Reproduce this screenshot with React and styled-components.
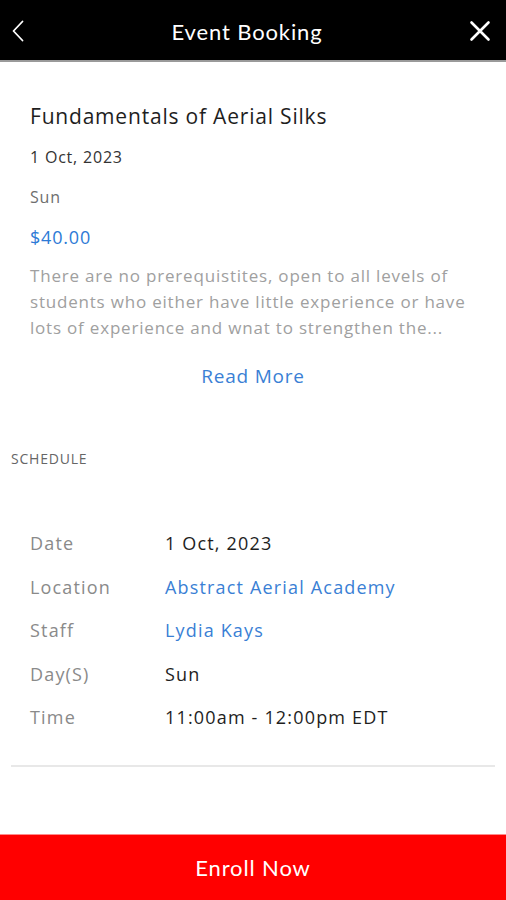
import React from "react";
import styled, { createGlobalStyle } from "styled-components";

const GlobalStyle = createGlobalStyle`
  html, body {
    margin: 0;
    padding: 0;
    background: #fff;
  }
  body {
    font-family: "Open Sans", "Noto Sans", sans-serif;
    letter-spacing: 0.05em;
  }
  * { box-sizing: border-box; }
`;

const schedule = [
  { label: "Date", value: "1 Oct, 2023" },
  { label: "Location", value: "Abstract Aerial Academy", link: true },
  { label: "Staff", value: "Lydia Kays", link: true },
  { label: "Day(S)", value: "Sun" },
  { label: "Time", value: "11:00am - 12:00pm EDT" },
];

const App = () => {
  return (
    <>
      <GlobalStyle />
      <Page>
        <Header>
          <IconButton aria-label="back">
            <svg width="14" height="24" viewBox="0 0 14 24">
              <path d="M11.5 2.5 L2.5 12 L11.5 21.5" fill="none" stroke="#fff" strokeWidth="1.8" strokeLinecap="round" strokeLinejoin="round" />
            </svg>
          </IconButton>
          <Title>Event Booking</Title>
          <IconButton aria-label="close">
            <svg width="22" height="22" viewBox="0 0 22 22">
              <path d="M2.5 2.5 L19.5 19.5 M19.5 2.5 L2.5 19.5" fill="none" stroke="#fff" strokeWidth="2.6" strokeLinecap="round" />
            </svg>
          </IconButton>
        </Header>

        <Content>
          <Details>
            <EventName>Fundamentals of Aerial Silks</EventName>
            <Meta>1 Oct, 2023</Meta>
            <Meta muted>Sun</Meta>
            <Price>$40.00</Price>
            <Description>
              There are no prerequistites, open to all levels of students who
              either have little experience or have lots of experience and wnat
              to strengthen the...
            </Description>
            <ReadMore>Read More</ReadMore>
          </Details>

          <SectionLabel>SCHEDULE</SectionLabel>

          <ScheduleList>
            {schedule.map((row) => (
              <ScheduleRow key={row.label}>
                <RowLabel>{row.label}</RowLabel>
                <RowValue link={row.link ? 1 : 0}>{row.value}</RowValue>
              </ScheduleRow>
            ))}
          </ScheduleList>
          <Divider />
        </Content>

        <EnrollButton>Enroll Now</EnrollButton>
      </Page>
    </>
  );
};

export default App;

const Page = styled.div`
  width: 506px;
  height: 900px;
  display: flex;
  flex-direction: column;
  overflow: hidden;
`;

const Header = styled.header`
  height: 62px;
  flex-shrink: 0;
  background: #000;
  border-bottom: 2px solid #9a9a9a;
  display: flex;
  align-items: center;
  justify-content: space-between;
  padding: 0 15px 0 11px;
`;

const IconButton = styled.button`
  background: none;
  border: none;
  padding: 0;
  display: flex;
  align-items: center;
  cursor: pointer;
  margin-top: 2px;
`;

const Title = styled.h1`
  margin: 0;
  color: #fff;
  font-family: "Lato", "Open Sans", sans-serif;
  font-weight: 400;
  font-size: 22px;
  letter-spacing: 0.04em;
  margin-top: 2px;
`;

const Content = styled.main`
  flex: 1;
  display: flex;
  flex-direction: column;
  padding: 0 11px;
`;

const Details = styled.section`
  display: flex;
  flex-direction: column;
  padding: 39px 19px 0;
`;

const EventName = styled.h2`
  margin: 0 0 15px;
  font-size: 21px;
  font-weight: 400;
  line-height: 30px;
  color: #1e1e1e;
`;

const Meta = styled.div`
  font-size: 16px;
  line-height: 22px;
  color: ${(p) => (p.muted ? "#6e6e6e" : "#333")};
  margin-bottom: ${(p) => (p.muted ? "17px" : "18px")};
`;

const Price = styled.div`
  font-size: 18px;
  line-height: 24px;
  color: #2d7ad6;
  margin: 0 0 14px;
`;

const Description = styled.p`
  margin: 0;
  font-size: 17px;
  line-height: 26px;
  color: #a0a0a0;
`;

const ReadMore = styled.a`
  align-self: center;
  margin-top: 22px;
  font-size: 19px;
  line-height: 26px;
  color: #3a7fd5;
  cursor: pointer;
`;

const SectionLabel = styled.h3`
  margin: 60px 0 0;
  font-size: 14px;
  font-weight: 400;
  line-height: 20px;
  color: #666;
`;

const ScheduleList = styled.div`
  display: flex;
  flex-direction: column;
  gap: 17.5px;
  padding: 61px 19px 0;
`;

const ScheduleRow = styled.div`
  display: grid;
  grid-template-columns: 135px 1fr;
  font-size: 18px;
  line-height: 26px;
  letter-spacing: 0.065em;
`;

const RowLabel = styled.span`
  color: #8a8a8a;
`;

const RowValue = styled.span`
  color: ${(p) => (p.link ? "#3a7fd5" : "#1e1e1e")};
`;

const Divider = styled.hr`
  margin: 35px 0 0;
  border: none;
  border-top: 2px solid #e8e8e8;
`;

const EnrollButton = styled.button`
  height: 66px;
  flex-shrink: 0;
  width: 100%;
  border: none;
  border-top: 1px solid #ff8a8a;
  background: #ff0000;
  color: #fff;
  font-family: "Lato", "Open Sans", sans-serif;
  font-size: 22px;
  letter-spacing: 0.04em;
  cursor: pointer;
`;
